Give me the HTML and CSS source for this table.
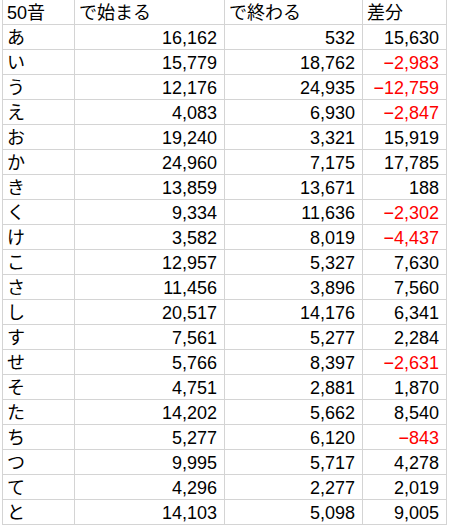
FILE: index.html
```html
<!DOCTYPE html>
<html lang="ja">
<head>
<meta charset="utf-8">
<link rel="stylesheet" href="styles.css">
</head>
<body>
<div class="sheet">
  <div class="c">50音</div><div class="c">で始まる</div><div class="c">で終わる</div><div class="c">差分</div>
  <div class="c">あ</div><div class="c n">16,162</div><div class="c n">532</div><div class="c n">15,630</div>
  <div class="c">い</div><div class="c n">15,779</div><div class="c n">18,762</div><div class="c n neg">−2,983</div>
  <div class="c">う</div><div class="c n">12,176</div><div class="c n">24,935</div><div class="c n neg">−12,759</div>
  <div class="c">え</div><div class="c n">4,083</div><div class="c n">6,930</div><div class="c n neg">−2,847</div>
  <div class="c">お</div><div class="c n">19,240</div><div class="c n">3,321</div><div class="c n">15,919</div>
  <div class="c">か</div><div class="c n">24,960</div><div class="c n">7,175</div><div class="c n">17,785</div>
  <div class="c">き</div><div class="c n">13,859</div><div class="c n">13,671</div><div class="c n">188</div>
  <div class="c">く</div><div class="c n">9,334</div><div class="c n">11,636</div><div class="c n neg">−2,302</div>
  <div class="c">け</div><div class="c n">3,582</div><div class="c n">8,019</div><div class="c n neg">−4,437</div>
  <div class="c">こ</div><div class="c n">12,957</div><div class="c n">5,327</div><div class="c n">7,630</div>
  <div class="c">さ</div><div class="c n">11,456</div><div class="c n">3,896</div><div class="c n">7,560</div>
  <div class="c">し</div><div class="c n">20,517</div><div class="c n">14,176</div><div class="c n">6,341</div>
  <div class="c">す</div><div class="c n">7,561</div><div class="c n">5,277</div><div class="c n">2,284</div>
  <div class="c">せ</div><div class="c n">5,766</div><div class="c n">8,397</div><div class="c n neg">−2,631</div>
  <div class="c">そ</div><div class="c n">4,751</div><div class="c n">2,881</div><div class="c n">1,870</div>
  <div class="c">た</div><div class="c n">14,202</div><div class="c n">5,662</div><div class="c n">8,540</div>
  <div class="c">ち</div><div class="c n">5,277</div><div class="c n">6,120</div><div class="c n neg">−843</div>
  <div class="c">つ</div><div class="c n">9,995</div><div class="c n">5,717</div><div class="c n">4,278</div>
  <div class="c">て</div><div class="c n">4,296</div><div class="c n">2,277</div><div class="c n">2,019</div>
  <div class="c">と</div><div class="c n">14,103</div><div class="c n">5,098</div><div class="c n">9,005</div>
</div>
</body>
</html>
```
FILE: styles.css
```css
html, body {
  margin: 0;
  padding: 0;
  background: #ffffff;
  overflow: hidden;
}
body {
  font-family: "Liberation Sans", "Noto Sans CJK JP", sans-serif;
  font-size: 18px;
  color: #000000;
}
.sheet {
  display: grid;
  grid-template-columns: 71px 149px 137px 83px;
  grid-auto-rows: 24px;
  gap: 1px;
  padding: 1px;
  background: #d4d4d4;
  width: max-content;
  margin: -1px 0 0 2px;
}
.c {
  background: #ffffff;
  padding: 2px 4px 0 4px;
  line-height: 22px;
  white-space: nowrap;
  overflow: hidden;
}
.n {
  text-align: right;
  padding-right: 7px;
}
.neg {
  color: #ff0000;
}
```
